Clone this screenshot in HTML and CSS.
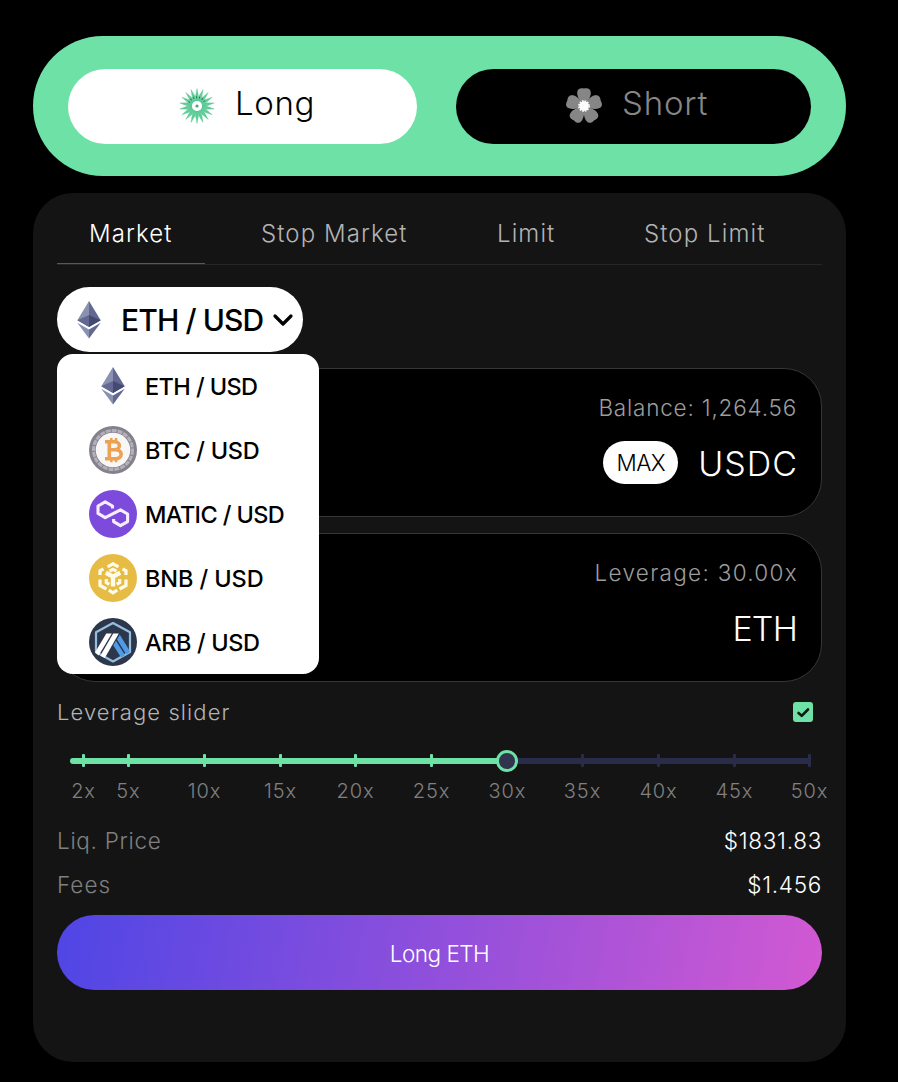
FILE: index.html
```html
<!DOCTYPE html>
<html lang="en">
<head>
    <meta charset="utf-8">
    <title>Trade</title>
    <link rel="stylesheet" href="styles.css">
</head>
<body>

<div class="trade">
    <div class="side">
        <button class="side-btn long">
            <svg width="36" height="36" viewBox="-18 -18 36 36">
                <defs>
                    <path id="ray" d="M-1.2 -5 L-1.5 -10 L0 -17.5 L1.5 -10 L1.2 -5 Z"/>
                    <g id="rays3">
                        <use href="#ray"/>
                        <use href="#ray" transform="rotate(20)"/>
                        <use href="#ray" transform="rotate(40)"/>
                    </g>
                </defs>
                <g fill="#5fcf9a" stroke="#4fb888" stroke-width=".3">
                    <use href="#rays3"/>
                    <use href="#rays3" transform="rotate(60)"/>
                    <use href="#rays3" transform="rotate(120)"/>
                    <use href="#rays3" transform="rotate(180)"/>
                    <use href="#rays3" transform="rotate(240)"/>
                    <use href="#rays3" transform="rotate(300)"/>
                </g>
                <path d="M-8 -3.5 A8.7 8.7 0 0 1 8 -3.5" fill="none" stroke="#2f7556" stroke-width="2" stroke-dasharray="1 2"/>
                <circle r="5" fill="#fff"/>
                <circle r="1.6" fill="#4da57f"/>
            </svg>
            <span>Long</span>
        </button>
        <button class="side-btn short">
            <svg width="36" height="36" viewBox="-18 -18 36 36">
                <defs>
                    <path id="petal" d="M0 0 C-3 -3 -7.2 -9 -6.8 -13.5 C-6.6 -17.4 -3.5 -18.4 0 -17.5 C3.5 -18.4 6.6 -17.4 6.8 -13.5 C7.2 -9 3 -3 0 0 Z"/>
                </defs>
                <g fill="#868686">
                    <use href="#petal"/>
                    <use href="#petal" transform="rotate(72)"/>
                    <use href="#petal" transform="rotate(144)"/>
                    <use href="#petal" transform="rotate(216)"/>
                    <use href="#petal" transform="rotate(288)"/>
                </g>
                <circle r="4.8" fill="#fff"/>
                <circle r="5.1" fill="none" stroke="#fff" stroke-width="1.6" stroke-dasharray="1.6 1.07"/>
            </svg>
            <span>Short</span>
        </button>
    </div>

    <div class="panel">
        <div class="tabs">
            <a class="tab active">Market</a>
            <a class="tab">Stop Market</a>
            <a class="tab">Limit</a>
            <a class="tab">Stop Limit</a>
        </div>

        <div class="pair">
            <button class="pair-btn">
                <svg class="coin" viewBox="0 0 48 48">
                    <g id="eth">
                        <path fill="#8a92b2" d="M24 5 L12.3 24.2 L24 31 Z"/>
                        <path fill="#62688f" d="M24 5 L35.7 24.2 L24 31 Z"/>
                        <path fill="#62688f" d="M24 19 L12.3 24.2 L24 31 Z"/>
                        <path fill="#454a75" d="M24 19 L35.7 24.2 L24 31 Z"/>
                        <path fill="#8a92b2" d="M12.3 26.7 L24 33.5 V42.5 Z"/>
                        <path fill="#62688f" d="M35.7 26.7 L24 33.5 V42.5 Z"/>
                    </g>
                </svg>
                <span>ETH / USD</span>
                <svg class="arrow" width="22" height="14" viewBox="0 0 22 14">
                    <path d="M3 3 L11 11 L19 3" fill="none" stroke="#000" stroke-width="3.2" stroke-linecap="round" stroke-linejoin="round"/>
                </svg>
            </button>

            <div class="menu">
                <div class="menu-item">
                    <svg class="coin" viewBox="0 0 48 48"><use href="#eth"/></svg>
                    <span class="eth">ETH / USD</span>
                </div>
                <div class="menu-item">
                    <svg class="coin" viewBox="0 0 48 48">
                        <circle cx="24" cy="24" r="24" fill="#85818c"/>
                        <circle cx="24" cy="24" r="19.5" fill="none" stroke="#b3b0b9" stroke-width="3" stroke-dasharray="5 1"/>
                        <circle cx="24" cy="24" r="17.3" fill="#f8f7f8"/>
                        <g fill="none" stroke="#eda253" stroke-width="3.6">
                            <path d="M16 15.7 H25.5 C32 15.7 32 23.7 25.5 23.7 H20.5 M16 32.7 H26.5 C34 32.7 34 23.7 26.5 23.7 M20.3 15 V33"/>
                            <path stroke-width="2.6" d="M22.3 12 V15 M27 12 V15.5 M22.3 33 V36.3 M27 33 V36.3"/>
                        </g>
                    </svg>
                    <span class="btc">BTC / USD</span>
                </div>
                <div class="menu-item">
                    <svg class="coin" viewBox="0 0 48 48">
                        <circle cx="24" cy="24" r="24" fill="#7c4bdc"/>
                        <path fill="none" stroke="#f6edff" stroke-width="3.1" stroke-linejoin="round" d="M23.5 18.6 V16 L16.2 11.9 L9 16 V23.4 L16.2 27.6 L31.5 19.8 L38.6 24 V31.6 L31.5 35.7 L24.6 31.6 V29"/>
                    </svg>
                    <span class="matic">MATIC / USD</span>
                </div>
                <div class="menu-item">
                    <svg class="coin" viewBox="0 0 48 48">
                        <circle cx="24" cy="24" r="24" fill="#e7bc45"/>
                        <g fill="none" stroke="#fffbea" stroke-width="3.2">
                            <path d="M18.5 12.8 L24 9.8 L29.5 12.8"/>
                            <path d="M11 21 V16.8 L14.5 14.8 M37 21 V16.8 L33.5 14.8"/>
                            <path d="M11 25.5 V31.5 L17.5 35 M37 25.5 V31.5 L30.5 35"/>
                            <path d="M19.8 36.2 L24 38.8 L28.2 36.2"/>
                            <path d="M17.3 25 V28.5 L20.3 30.3 M30.7 25 V28.5 L27.7 30.3"/>
                            <path stroke-width="4.4" d="M16.8 18.7 L24 22.6 L31.2 18.7 M24 22 V32.5"/>
                            <path d="M20.5 17.2 L24 15.4 L27.5 17.2"/>
                        </g>
                    </svg>
                    <span class="bnb">BNB / USD</span>
                </div>
                <div class="menu-item">
                    <svg class="coin" viewBox="0 0 48 48">
                        <circle cx="24" cy="24" r="24" fill="#2d374b"/>
                        <path fill="none" stroke="#96bedc" stroke-width="2.2" stroke-linejoin="round" d="M24 5 L41 14.3 V34 L24 43.5 L7 34 V14.3 Z"/>
                        <path fill="#fff" d="M17.3 15.5 H22.8 L9.7 37.5 L6 34.5 Z"/>
                        <path fill="#fff" d="M24.2 15.5 H29.8 L15.8 40 L11.3 37.7 Z"/>
                        <path fill="#4f9be8" d="M28 21.5 L30.8 16.8 L40.5 32.5 V34.5 L37.3 36.5 Z"/>
                        <path fill="#4f9be8" d="M24.3 27.2 L27 22.8 L36 37.3 L32 39.6 Z"/>
                    </svg>
                    <span class="arb">ARB / USD</span>
                </div>
            </div>
        </div>

        <div class="box">
            <div class="box-label balance">Balance: 1,264.56</div>
            <div class="box-row">
                <button class="max">MAX</button>
                <span class="usdc">USDC</span>
            </div>
        </div>
        <div class="box">
            <div class="box-label lev">Leverage: 30.00x</div>
            <div class="box-row">
                <span class="token">ETH</span>
            </div>
        </div>

        <div class="slider-head">
            <span>Leverage slider</span>
            <svg width="20" height="20" viewBox="0 0 20 20">
                <rect width="20" height="20" rx="3" fill="#6ee1a6"/>
                <path d="M5.5 11 L8.7 13.8 L15 7.5" fill="none" stroke="#0c1a13" stroke-width="2.6" stroke-linecap="round" stroke-linejoin="round"/>
            </svg>
        </div>

        <div class="slider">
            <div class="fill"></div>
            <div class="mark on" style="left:13px"><i></i><span>2x</span></div>
            <div class="mark on" style="left:58px"><i></i><span>5x</span></div>
            <div class="mark on" style="left:134px"><i></i><span>10x</span></div>
            <div class="mark on" style="left:210px"><i></i><span>15x</span></div>
            <div class="mark on" style="left:285px"><i></i><span>20x</span></div>
            <div class="mark on" style="left:361px"><i></i><span>25x</span></div>
            <div class="mark on" style="left:437px"><i></i><span>30x</span></div>
            <div class="mark" style="left:512px"><i></i><span>35x</span></div>
            <div class="mark" style="left:588px"><i></i><span>40x</span></div>
            <div class="mark" style="left:664px"><i></i><span>45x</span></div>
            <div class="mark" style="left:739px"><i></i><span>50x</span></div>
            <div class="handle"></div>
        </div>

        <div class="info">
            <div class="info-row"><span class="liq">Liq. Price</span><b>$1831.83</b></div>
            <div class="info-row"><span>Fees</span><b>$1.456</b></div>
        </div>

        <button class="submit">Long ETH</button>
    </div>
</div>

</body>
</html>
```
FILE: styles.css
```css
* { box-sizing: border-box; }
body {
    margin: 0;
    background: #000;
    color: #fff;
    font-family: Inter, "Liberation Sans", sans-serif;
    font-weight: 300;
}
button {
    border: 0;
    padding: 0;
    font: inherit;
    color: inherit;
}
svg { display: block; flex: none; }

.trade {
    width: 813px;
    margin: 36px 0 0 33px;
}

/* long / short switch */
.side {
    display: flex;
    justify-content: space-between;
    height: 140px;
    padding: 33px 35px 32px;
    border-radius: 70px;
    background: #6ee1a6;
}
.side-btn {
    display: flex;
    align-items: center;
    height: 75px;
    padding-bottom: 2px;
    border-radius: 38px;
    font-size: 33px;
    line-height: 68px;
}
.side-btn span { height: 73px; }
.long {
    width: 349px;
    padding-left: 111px;
    gap: 20px;
    background: #fff;
    color: #000;
    letter-spacing: .6px;
}
.short {
    width: 355px;
    padding-left: 110px;
    gap: 20px;
    background: #000;
    color: #868686;
    letter-spacing: .8px;
}

.panel {
    height: 869px;
    margin-top: 17px;
    padding: 0 24px;
    border-radius: 40px;
    background: #141414;
}

.tabs {
    display: grid;
    grid-template-columns: 148px 212px 123px 186px;
    column-gap: 24px;
    height: 72px;
    padding-top: 10px;
    border-bottom: 1px solid #262626;
}
.tab {
    height: 61px;
    padding-left: 32px;
    color: #b3b3b3;
    font-size: 24px;
    line-height: 61px;
    letter-spacing: 1.1px;
    white-space: nowrap;
}
.tab.active {
    color: #fff;
    border-bottom: 1px solid #7433c4;
}

/* pair selector */
.pair {
    position: relative;
    height: 65px;
    margin-top: 22px;
}
.coin { width: 48px; height: 48px; }
.pair-btn {
    display: flex;
    align-items: center;
    width: 246px;
    height: 65px;
    padding-left: 8px;
    border-radius: 33px;
    background: #fff;
    color: #000;
    font-size: 30px;
    font-weight: 500;
    white-space: nowrap;
}
.pair-btn span {
    flex: none;
    width: 159px;
    padding-left: 8px;
    letter-spacing: -.9px;
    text-align: left;
}
.menu {
    position: absolute;
    z-index: 2;
    top: 67px;
    left: 0;
    width: 262px;
    height: 320px;
    border-radius: 16px;
    background: #fff;
    color: #000;
    font-size: 23.5px;
    font-weight: 500;
}
.menu-item {
    display: flex;
    align-items: center;
    gap: 8px;
    height: 64px;
    padding-left: 32px;
    white-space: nowrap;
    letter-spacing: -.4px;
}
.menu-item .eth,
.menu-item .matic { letter-spacing: -.6px; }
.menu-item .btc { letter-spacing: -.25px; }
.menu-item .bnb { letter-spacing: -.1px; }

.box {
    height: 149px;
    margin-top: 16px;
    padding: 24px 24px 0;
    border: 1px solid #363636;
    border-radius: 38px;
    background: #000;
}
.box-label {
    height: 30px;
    color: #9c9c9c;
    font-size: 22.5px;
    line-height: 30px;
    text-align: right;
}
.balance { letter-spacing: .8px; }
.lev { letter-spacing: 1.3px; margin-right: -1px; }
.box-row {
    display: flex;
    align-items: center;
    justify-content: flex-end;
    gap: 20px;
    height: 43px;
    margin-top: 18px;
    font-size: 34px;
}
.usdc { letter-spacing: 1px; margin-right: -1px; padding-top: 1px; }
.token { letter-spacing: -.8px; padding-top: 2px; }
.max {
    width: 75px;
    height: 43px;
    border-radius: 22px;
    background: #fff;
    color: #000;
    font-size: 22.5px;
    letter-spacing: -.6px;
}

/* leverage */
.slider-head {
    display: flex;
    align-items: center;
    justify-content: space-between;
    height: 30px;
    margin-top: 15px;
    padding-right: 9px;
    color: #b3b3b3;
    font-size: 22px;
    letter-spacing: 1.1px;
}
.slider {
    position: relative;
    width: 740px;
    height: 6px;
    margin: 31px 0 0 13px;
    border-radius: 3px;
    background: #292c48;
}
.fill {
    width: 437px;
    height: 6px;
    border-radius: 3px;
    background: #6ee1a6;
}
.mark {
    position: absolute;
    top: -4px;
    width: 60px;
    margin-left: -30px;
    color: #808080;
    font-size: 20px;
    line-height: 24px;
    letter-spacing: .9px;
    text-align: center;
}
.mark span { padding-left: 1px; }
.mark i {
    display: block;
    width: 3px;
    height: 13px;
    margin: 0 auto 12px;
    border-radius: 1px;
    background: #292c48;
}
.mark.on i { background: #6ee1a6; }
.handle {
    position: absolute;
    top: -8px;
    left: 426px;
    width: 22px;
    height: 22px;
    border: 3px solid #6ee1a6;
    border-radius: 50%;
    background: #30344f;
}

.info { margin-top: 55px; }
.info-row {
    display: flex;
    justify-content: space-between;
    height: 44px;
    color: #808080;
    font-size: 22.5px;
    line-height: 44px;
    letter-spacing: 1px;
}
.info-row .liq { letter-spacing: .7px; }
.info-row b {
    color: #fff;
    font-weight: 300;
    letter-spacing: .7px;
}

.submit {
    display: block;
    width: 765px;
    height: 75px;
    margin-top: 8px;
    padding-top: 1px;
    border-radius: 38px;
    background: linear-gradient(100deg, #4f46e5, #d259d2);
    font-size: 22.5px;
    letter-spacing: -.5px;
}
```
